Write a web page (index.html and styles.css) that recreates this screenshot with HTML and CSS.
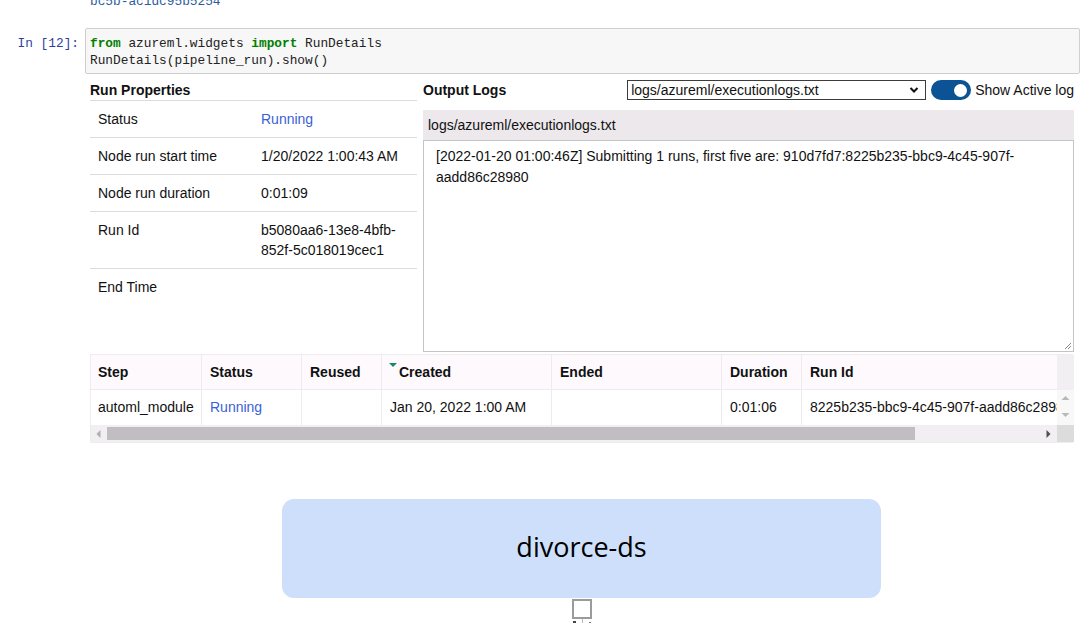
FILE: index.html
```html
<!DOCTYPE html>
<html>
<head>
<meta charset="utf-8">
<link rel="stylesheet" href="styles.css">
</head>
<body>
<div class="prev-output">bc5b-ac1dc95b5254</div>

<div class="cell">
  <div class="prompt">In [12]:</div>
  <div class="input"><span class="kw">from</span> azureml.widgets <span class="kw">import</span> RunDetails<br>RunDetails(pipeline_run).show()</div>
</div>

<div class="widget">
  <div class="top">
    <div class="props">
      <div class="props-title">Run Properties</div>
      <div class="prow"><div class="plabel">Status</div><div class="pval running">Running</div></div>
      <div class="prow"><div class="plabel">Node run start time</div><div class="pval">1/20/2022 1:00:43 AM</div></div>
      <div class="prow"><div class="plabel">Node run duration</div><div class="pval">0:01:09</div></div>
      <div class="prow"><div class="plabel">Run Id</div><div class="pval">b5080aa6-13e8-4bfb-852f-5c018019cec1</div></div>
      <div class="prow last"><div class="plabel">End Time</div><div class="pval"></div></div>
    </div>
    <div class="logs">
      <div class="logs-head">
        <div class="logs-title">Output Logs</div>
        <div class="logs-controls">
          <div class="select">
            <span>logs/azureml/executionlogs.txt</span>
            <svg width="10" height="8" viewBox="0 0 10 8"><path d="M1.5 2 L5 5.5 L8.5 2" fill="none" stroke="#111" stroke-width="2"/></svg>
          </div>
          <div class="toggle"><div class="knob"></div></div>
          <div class="toggle-label">Show Active log</div>
        </div>
      </div>
      <div class="log-file">logs/azureml/executionlogs.txt</div>
      <div class="log-text">[2022-01-20 01:00:46Z] Submitting 1 runs, first five are: 910d7fd7:8225b235-bbc9-4c45-907f-aadd86c28980
        <svg class="grip" width="10" height="10" viewBox="0 0 10 10"><path d="M9 3 L3 9 M9 6 L6 9" stroke="#888" stroke-width="1"/></svg>
      </div>
    </div>
  </div>

  <div class="table">
    <div class="tmain">
      <div class="trow thead">
        <div class="c c1">Step</div>
        <div class="c c2">Status</div>
        <div class="c c3">Reused</div>
        <div class="c c4 sorted"><span class="sort"></span>Created</div>
        <div class="c c5">Ended</div>
        <div class="c c6">Duration</div>
        <div class="c c7">Run Id</div>
      </div>
      <div class="trow tbody">
        <div class="c c1">automl_module</div>
        <div class="c c2 running">Running</div>
        <div class="c c3"></div>
        <div class="c c4">Jan 20, 2022 1:00 AM</div>
        <div class="c c5"></div>
        <div class="c c6">0:01:06</div>
        <div class="c c7">8225b235-bbc9-4c45-907f-aadd86c28980</div>
      </div>
    </div>
    <div class="vscroll">
      <div class="vs-head"></div>
      <div class="vs-body">
        <svg width="9" height="6" viewBox="0 0 9 6"><path d="M0.5 5 L4.5 1 L8.5 5 Z" fill="#b8b8b8"/></svg>
        <svg width="9" height="6" viewBox="0 0 9 6"><path d="M0.5 1 L4.5 5 L8.5 1 Z" fill="#b8b8b8"/></svg>
      </div>
    </div>
    <div class="hscroll">
      <svg class="arr" width="5" height="8" viewBox="0 0 5 8"><path d="M4.5 0 L0.5 4 L4.5 8 Z" fill="#b0b0b0"/></svg>
      <div class="thumb"></div>
      <svg class="arr" width="5" height="8" viewBox="0 0 5 8"><path d="M0.5 0 L4.5 4 L0.5 8 Z" fill="#505050"/></svg>
    </div>
    <div class="corner"></div>
  </div>
</div>

<div class="graph">
  <div class="node">divorce-ds</div>
  <div class="port"></div>
  <div class="below">
    <span class="mark"></span>
    <span class="stem"></span>
    <span class="mark small"></span>
  </div>
</div>
</body>
</html>
```

FILE: styles.css
```css
html, body {
  margin: 0;
  padding: 0;
  background: #fff;
  overflow: hidden;
  height: 623px;
}
body {
  font-family: "Liberation Sans", Arial, sans-serif;
  font-size: 14px;
  color: #111;
}
.prev-output {
  font-family: "Liberation Mono", "DejaVu Sans Mono", monospace;
  font-size: 12.8px;
  line-height: 17px;
  color: #2a5c9e;
  padding-left: 90px;
  margin-top: -7px;
  height: 17px;
}
.cell {
  display: flex;
  margin-top: 18px;
}
.prompt {
  width: 79px;
  padding-right: 6px;
  text-align: right;
  font-family: "Liberation Mono", "DejaVu Sans Mono", monospace;
  font-size: 12.8px;
  line-height: 17px;
  color: #303f9f;
  padding-top: 7px;
  box-sizing: content-box;
}
.input {
  width: 985px;
  background: #f7f7f7;
  border: 1px solid #cfcfcf;
  border-radius: 2px;
  padding: 6px 4px 4px 4px;
  font-family: "Liberation Mono", "DejaVu Sans Mono", monospace;
  font-size: 12.8px;
  line-height: 17px;
  color: #222;
}
.kw {
  color: #008000;
  font-weight: bold;
}
.widget {
  margin-left: 90px;
  width: 984px;
  margin-top: 6px;
}
.top {
  display: flex;
  gap: 6px;
  align-items: flex-start;
}
.props {
  width: 327px;
}
.props-title {
  font-weight: bold;
  height: 20px;
  line-height: 20px;
  border-bottom: 1px solid #dcdcdc;
}
.prow {
  display: flex;
  padding: 8px 0;
  line-height: 20px;
  border-bottom: 1px solid #dcdcdc;
}
.prow.last {
  border-bottom: none;
}
.plabel {
  width: 163px;
  padding-left: 8px;
}
.pval {
  width: 148px;
  overflow-wrap: break-word;
}
.running {
  color: #3a5fd6;
}
.logs {
  width: 651px;
}
.logs-head {
  display: flex;
  justify-content: space-between;
  align-items: center;
  height: 20px;
}
.logs-title {
  font-weight: bold;
}
.logs-controls {
  display: flex;
  align-items: center;
}
.select {
  height: 18px;
  border: 1px solid #3c3c3c;
  display: flex;
  align-items: center;
  justify-content: space-between;
  padding: 0 6px 0 3px;
  box-sizing: content-box;
  width: 288px;
}
.toggle {
  margin-left: 5px;
  width: 40px;
  height: 20px;
  border-radius: 10px;
  background: #0b5394;
  display: flex;
  align-items: center;
  justify-content: flex-end;
  padding-right: 4px;
  box-sizing: border-box;
}
.knob {
  width: 13px;
  height: 13px;
  border-radius: 50%;
  background: #fff;
}
.toggle-label {
  margin-left: 4px;
}
.log-file {
  margin-top: 10px;
  height: 30px;
  line-height: 30px;
  background: #ece8ec;
  padding-left: 5px;
}
.log-text {
  position: relative;
  border: 1px solid #c4c4c4;
  padding: 5px 12px 15px;
  line-height: 21px;
  box-sizing: content-box;
  height: 190px;
  width: 625px;
}
.grip {
  position: absolute;
  right: 1px;
  bottom: 1px;
}
.table {
  margin-top: 2px;
  width: 983px;
  display: grid;
  grid-template-columns: 966px 17px;
  grid-template-rows: 70px 17px;
  border: 1px solid #efecef;
  box-sizing: border-box;
}
.tmain {
  overflow: hidden;
}
.trow {
  display: flex;
  height: 35px;
}
.thead {
  background: #fdf9fd;
  font-weight: bold;
  border-bottom: 1px solid #eeeaee;
  box-sizing: border-box;
}
.c {
  flex: none;
  padding-left: 8px;
  border-right: 1px solid #eeeaee;
  box-sizing: border-box;
  line-height: 34px;
  white-space: nowrap;
  overflow: hidden;
}
.tbody .c {
  line-height: 35px;
}
.c1 { width: 111px; padding-left: 7px; }
.c2 { width: 100px; }
.c3 { width: 80px; }
.c4 { width: 170px; }
.c5 { width: 170px; }
.c6 { width: 80px; }
.c7 { width: 255px; border-right: none; }
.sorted {
  position: relative;
  padding-left: 17px;
}
.tbody .c4 {
  padding-left: 8px;
}
.sort {
  position: absolute;
  left: 7px;
  top: 8px;
  width: 0;
  height: 0;
  border-left: 4px solid transparent;
  border-right: 4px solid transparent;
  border-top: 4px solid #1a8a5e;
}
.vscroll {
  display: flex;
  flex-direction: column;
}
.vs-head {
  height: 35px;
  background: #f1eff1;
}
.vs-body {
  height: 35px;
  background: #f8f8f8;
  display: flex;
  flex-direction: column;
  align-items: center;
  justify-content: space-between;
  padding: 5px 0 7px;
  box-sizing: border-box;
}
.hscroll {
  background: #f1eff1;
  display: flex;
  align-items: center;
  padding: 0 6px 0 5px;
  gap: 6px;
}
.hscroll .arr {
  flex: none;
}
.thumb {
  width: 808px;
  height: 13px;
  background: #c1bec1;
  margin-right: auto;
}
.corner {
  background: #dcdcdc;
}
.graph {
  margin-top: 56px;
  margin-left: 282px;
  width: 599px;
  display: flex;
  flex-direction: column;
  align-items: center;
}
.node {
  width: 599px;
  height: 99px;
  border-radius: 12px;
  background: #cddffa;
  display: flex;
  align-items: center;
  justify-content: center;
  padding-bottom: 5px;
  box-sizing: border-box;
  font-family: "Open Sans", "Noto Sans", sans-serif;
  font-size: 27px;
  color: #000;
}
.port {
  margin-top: 1px;
  width: 20px;
  height: 20px;
  border: 2px solid #9b9b9b;
  box-sizing: border-box;
  background: #fff;
}
.below {
  display: flex;
  align-items: flex-start;
  gap: 6px;
  height: 8px;
}
.stem {
  width: 1px;
  height: 8px;
  background: #bbb;
}
.mark {
  margin-top: 2px;
  width: 3px;
  height: 6px;
  background: #444;
}
.mark.small {
  margin-top: 3px;
  width: 2px;
  height: 2px;
  background: #777;
}
```
